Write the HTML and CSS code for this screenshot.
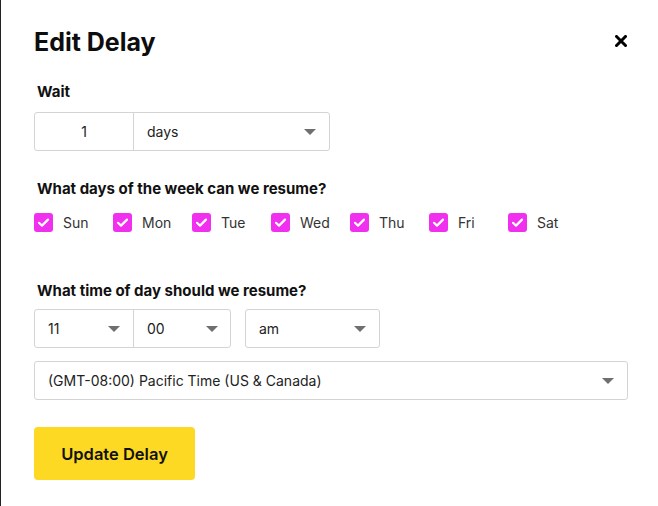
FILE: index.html
```html
<!DOCTYPE html>
<html>
<head>
<meta charset="utf-8">
<link rel="stylesheet" href="styles.css">
</head>
<body>
<div class="modal">
  <div class="header">
    <h1 class="title">Edit Delay</h1>
    <svg class="close" width="12" height="12" viewBox="0 0 12 12"><path d="M1.5 1.5 L10.5 10.5 M10.5 1.5 L1.5 10.5" stroke="#000" stroke-width="3" stroke-linecap="square"/></svg>
  </div>

  <div class="label wait-label">Wait</div>
  <div class="group wait-group">
    <div class="cell num">1</div>
    <div class="cell sel days">days<span class="caret"></span></div>
  </div>

  <div class="label days-label">What days of the week can we resume?</div>
  <div class="weekdays">
    <div class="day"><span class="box"><svg width="19" height="19" viewBox="0 0 19 19"><path d="M5 9.8 L8 12.6 L14 6.6" fill="none" stroke="#fff" stroke-width="2.2" stroke-linecap="round" stroke-linejoin="round"/></svg></span>Sun</div>
    <div class="day"><span class="box"><svg width="19" height="19" viewBox="0 0 19 19"><path d="M5 9.8 L8 12.6 L14 6.6" fill="none" stroke="#fff" stroke-width="2.2" stroke-linecap="round" stroke-linejoin="round"/></svg></span>Mon</div>
    <div class="day"><span class="box"><svg width="19" height="19" viewBox="0 0 19 19"><path d="M5 9.8 L8 12.6 L14 6.6" fill="none" stroke="#fff" stroke-width="2.2" stroke-linecap="round" stroke-linejoin="round"/></svg></span>Tue</div>
    <div class="day"><span class="box"><svg width="19" height="19" viewBox="0 0 19 19"><path d="M5 9.8 L8 12.6 L14 6.6" fill="none" stroke="#fff" stroke-width="2.2" stroke-linecap="round" stroke-linejoin="round"/></svg></span>Wed</div>
    <div class="day"><span class="box"><svg width="19" height="19" viewBox="0 0 19 19"><path d="M5 9.8 L8 12.6 L14 6.6" fill="none" stroke="#fff" stroke-width="2.2" stroke-linecap="round" stroke-linejoin="round"/></svg></span>Thu</div>
    <div class="day"><span class="box"><svg width="19" height="19" viewBox="0 0 19 19"><path d="M5 9.8 L8 12.6 L14 6.6" fill="none" stroke="#fff" stroke-width="2.2" stroke-linecap="round" stroke-linejoin="round"/></svg></span>Fri</div>
    <div class="day"><span class="box"><svg width="19" height="19" viewBox="0 0 19 19"><path d="M5 9.8 L8 12.6 L14 6.6" fill="none" stroke="#fff" stroke-width="2.2" stroke-linecap="round" stroke-linejoin="round"/></svg></span>Sat</div>
  </div>

  <div class="label time-label">What time of day should we resume?</div>
  <div class="time-row">
    <div class="group hm">
      <div class="cell sel hour">11<span class="caret"></span></div>
      <div class="cell sel minute">00<span class="caret"></span></div>
    </div>
    <div class="group ampm">
      <div class="cell sel">am<span class="caret"></span></div>
    </div>
  </div>
  <div class="group tz">
    <div class="cell sel">(GMT-08:00) Pacific Time (US &amp; Canada)<span class="caret"></span></div>
  </div>

  <button class="btn">Update Delay</button>
</div>
</body>
</html>
```
FILE: styles.css
```css
* { box-sizing: border-box; }
html, body { margin: 0; padding: 0; background: #fff; }
body {
  font-family: "Inter", "Noto Sans", sans-serif;
  color: #111;
  height: 506px;
  border-left: 1px solid #222;
}
.modal {
  padding: 27px 31px 0 33px;
}
.header {
  display: flex;
  justify-content: space-between;
  align-items: center;
  height: 30px;
}
.title {
  margin: 0;
  font-size: 25px;
  font-weight: 700;
  line-height: 30px;
  color: #0d0d0d;
}
.close { margin-top: -2px; }
.label {
  font-size: 15px;
  font-weight: 700;
  line-height: 17px;
  color: #111;
  margin-left: 3px;
}
.wait-label { margin-top: 26px; }
.group {
  display: flex;
  border: 1px solid #d4d4d4;
  border-radius: 3px;
  height: 39px;
  background: #fff;
}
.cell {
  display: flex;
  align-items: center;
  font-size: 14px;
  color: #222;
  position: relative;
}
.cell + .cell { border-left: 1px solid #d4d4d4; }
.wait-group { width: 296px; margin-top: 12px; }
.num { width: 98px; justify-content: center; }
.sel { flex: 1; padding-left: 13px; }
.caret {
  position: absolute;
  right: 13px;
  top: 16px;
  width: 0; height: 0;
  border-left: 6px solid transparent;
  border-right: 6px solid transparent;
  border-top: 6px solid #6f6f6f;
}
.days-label { margin-top: 29px; }
.weekdays {
  display: flex;
  margin-top: 16px;
}
.day {
  width: 79px;
  display: flex;
  align-items: center;
  font-size: 14px;
  color: #333;
}
.box {
  width: 19px; height: 19px;
  border-radius: 3px;
  background: #f02fef;
  margin-right: 10px;
  display: flex;
}
.time-label { margin-top: 50px; }
.time-row {
  display: flex;
  gap: 14px;
  margin-top: 10px;
}
.hm { width: 197px; }
.hm .cell { width: 98px; flex: none; }
.ampm { width: 135px; }
.tz { width: 594px; margin-top: 13px; }
.btn {
  margin-top: 27px;
  width: 161px;
  height: 53px;
  border: 0;
  border-radius: 4px;
  background: #fdd923;
  font-family: inherit;
  font-size: 16.5px;
  font-weight: 600;
  color: #111;
  display: block;
}
```
